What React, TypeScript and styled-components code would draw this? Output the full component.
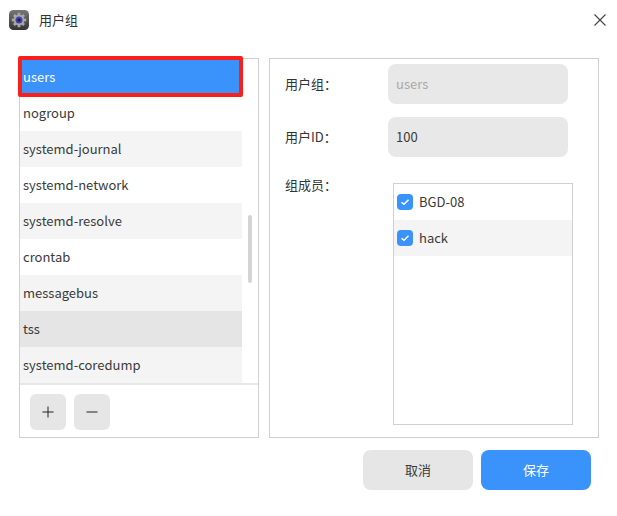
import React from 'react';
import styled, {createGlobalStyle} from 'styled-components';

const Global = createGlobalStyle`
  html, body {
    margin: 0;
    padding: 0;
    background: #fff;
  }
  * {
    box-sizing: border-box;
  }
`;

const Dialog = styled.div`
  width: 617px;
  height: 516px;
  background: #fff;
  display: flex;
  flex-direction: column;
  font-family: 'Noto Sans CJK SC', 'Noto Sans', sans-serif;
  font-size: 13px;
  color: #3a3a3a;
`;

const TitleBar = styled.div`
  height: 39px;
  display: flex;
  align-items: center;
  padding-left: 9px;
`;

const AppIcon = styled.svg`
  width: 20px;
  height: 20px;
`;

const Title = styled.span`
  margin-left: 10px;
  margin-bottom: 1px;
  font-size: 13px;
  color: #333;
`;

const CloseButton = styled.button`
  margin-left: auto;
  margin-right: 9px;
  width: 16px;
  height: 16px;
  padding: 0;
  border: none;
  background: none;
  display: flex;
`;

const Body = styled.div`
  margin-top: 19px;
  padding-left: 19px;
  display: flex;
  gap: 10px;
`;

const ListPanel = styled.div`
  width: 240px;
  height: 380px;
  border: 1px solid #d0d0d0;
  display: flex;
  flex-direction: column;
  position: relative;
`;

const ListScroll = styled.div`
  height: 326px;
  position: relative;
  border-bottom: 2px solid #e8e8e8;
  overflow: hidden;
`;

const Row = styled.div<{$tone: 'plain' | 'alt' | 'hover' | 'selected'}>`
  width: 222px;
  height: 36px;
  padding: 0 0 2px 3px;
  display: flex;
  align-items: center;
  background: ${(p) =>
    p.$tone === 'selected'
      ? '#3a92fb'
      : p.$tone === 'hover'
        ? '#e5e5e5'
        : p.$tone === 'alt'
          ? '#f4f4f4'
          : '#fff'};
  color: ${(p) => (p.$tone === 'selected' ? '#fff' : '#3a3a3a')};
`;

const Highlight = styled.div`
  position: absolute;
  left: -2px;
  top: -3px;
  width: 225px;
  height: 41px;
  border: 4px solid #f9201c;
  border-radius: 2px;
`;

const ScrollThumb = styled.div`
  position: absolute;
  left: 228px;
  top: 156px;
  width: 4px;
  height: 68px;
  border-radius: 2px;
  background: #d4d4d4;
`;

const ListFooter = styled.div`
  padding: 9px 0 0 10px;
  display: flex;
  gap: 8px;
`;

const SquareButton = styled.button`
  width: 36px;
  height: 36px;
  padding: 0;
  border: none;
  border-radius: 6px;
  background: #e6e6e6;
  display: flex;
  align-items: center;
  justify-content: center;
`;

const FormPanel = styled.div`
  width: 330px;
  height: 380px;
  border: 1px solid #d0d0d0;
  padding: 5px 0 0 15px;
  display: flex;
  flex-direction: column;
`;

const FieldRow = styled.div`
  display: flex;
  height: 40px;
  margin-bottom: 13px;
  align-items: center;
`;

const Label = styled.span`
  width: 103px;
  flex: none;
  margin-bottom: 2px;
  color: #333;
`;

const Field = styled.div<{$disabled?: boolean}>`
  width: 180px;
  height: 40px;
  padding: 0 0 2px 8px;
  display: flex;
  align-items: center;
  border-radius: 8px;
  background: #e8e8e8;
  color: ${(p) => (p.$disabled ? '#a8a8a8' : '#3a3a3a')};
`;

const MembersRow = styled.div`
  display: flex;
  align-items: flex-start;
`;

const MembersLabel = styled(Label)`
  margin-top: 5px;
  width: 108px;
`;

const MembersBox = styled.div`
  margin-top: 13px;
  width: 180px;
  height: 242px;
  border: 1px solid #d0d0d0;
`;

const Member = styled.div<{$alt?: boolean}>`
  height: 36px;
  display: flex;
  align-items: center;
  gap: 6px;
  padding-left: 3px;
  background: ${(p) => (p.$alt ? '#f4f4f4' : '#fff')};
`;

const MemberName = styled.span`
  margin-bottom: 2px;
`;

const Check = styled.span`
  width: 16px;
  height: 16px;
  border-radius: 4px;
  background: #3a92fb;
  display: flex;
  align-items: center;
  justify-content: center;
`;

const Actions = styled.div`
  margin-top: 12px;
  padding-left: 363px;
  display: flex;
  gap: 8px;
`;

const ActionButton = styled.button<{$primary?: boolean}>`
  width: 110px;
  height: 40px;
  padding: 0 0 2px;
  border: none;
  border-radius: 8px;
  font: inherit;
  background: ${(p) => (p.$primary ? '#3a92fb' : '#e6e6e6')};
  color: ${(p) => (p.$primary ? '#fff' : '#3a3a3a')};
`;

const groups = [
  'users',
  'nogroup',
  'systemd-journal',
  'systemd-network',
  'systemd-resolve',
  'crontab',
  'messagebus',
  'tss',
  'systemd-coredump',
];

const toneFor = (i: number) => {
  if (i === 0) return 'selected' as const;
  if (i === 7) return 'hover' as const;
  return i % 2 === 0 ? ('alt' as const) : ('plain' as const);
};

const CheckMark = () => (
  <svg width="10" height="8" viewBox="0 0 10 8">
    <path d="M1.5 4.2 L4 6.3 L8.5 1.8" fill="none" stroke="#fff" strokeWidth="1.5" />
  </svg>
);

export default function App() {
  return (
    <Dialog>
      <Global />
      <TitleBar>
        <AppIcon viewBox="0 0 20 20">
          <defs>
            <linearGradient id="tile" x1="0" y1="0" x2="0" y2="1">
              <stop offset="0" stopColor="#777" />
              <stop offset="1" stopColor="#333" />
            </linearGradient>
          </defs>
          <rect width="20" height="20" rx="4.5" fill="url(#tile)" />
          {[0, 45, 90, 135].map((a) => (
            <rect key={a} x="8.6" y="2.8" width="2.8" height="14.4" fill="#a8a8a8" transform={`rotate(${a} 10 10)`} />
          ))}
          <circle cx="10" cy="10" r="5.4" fill="#a8a8a8" />
          <circle cx="10" cy="10" r="3.5" fill="#4a3fb0" />
          <circle cx="10" cy="10" r="1.6" fill="#1d1d44" />
        </AppIcon>
        <Title>用户组</Title>
        <CloseButton>
          <svg width="16" height="16" viewBox="0 0 16 16">
            <path d="M2.5 2.5 L13.5 13.5 M13.5 2.5 L2.5 13.5" stroke="#444" strokeWidth="1.1" fill="none" />
          </svg>
        </CloseButton>
      </TitleBar>
      <Body>
        <ListPanel>
          <ListScroll>
            {groups.map((g, i) => (
              <Row key={g} $tone={toneFor(i)}>
                {g}
              </Row>
            ))}
            <ScrollThumb />
          </ListScroll>
          <Highlight />
          <ListFooter>
            <SquareButton>
              <svg width="12" height="12" viewBox="0 0 12 12">
                <path d="M6 0.5 V11.5 M0.5 6 H11.5" stroke="#222" strokeWidth="1" fill="none" />
              </svg>
            </SquareButton>
            <SquareButton>
              <svg width="12" height="12" viewBox="0 0 12 12">
                <path d="M0.5 6 H11.5" stroke="#222" strokeWidth="1" fill="none" />
              </svg>
            </SquareButton>
          </ListFooter>
        </ListPanel>
        <FormPanel>
          <FieldRow>
            <Label>用户组：</Label>
            <Field $disabled>users</Field>
          </FieldRow>
          <FieldRow>
            <Label>用户ID：</Label>
            <Field>100</Field>
          </FieldRow>
          <MembersRow>
            <MembersLabel>组成员：</MembersLabel>
            <MembersBox>
              <Member>
                <Check>
                  <CheckMark />
                </Check>
                <MemberName>BGD-08</MemberName>
              </Member>
              <Member $alt>
                <Check>
                  <CheckMark />
                </Check>
                <MemberName>hack</MemberName>
              </Member>
            </MembersBox>
          </MembersRow>
        </FormPanel>
      </Body>
      <Actions>
        <ActionButton>取消</ActionButton>
        <ActionButton $primary>保存</ActionButton>
      </Actions>
    </Dialog>
  );
}
